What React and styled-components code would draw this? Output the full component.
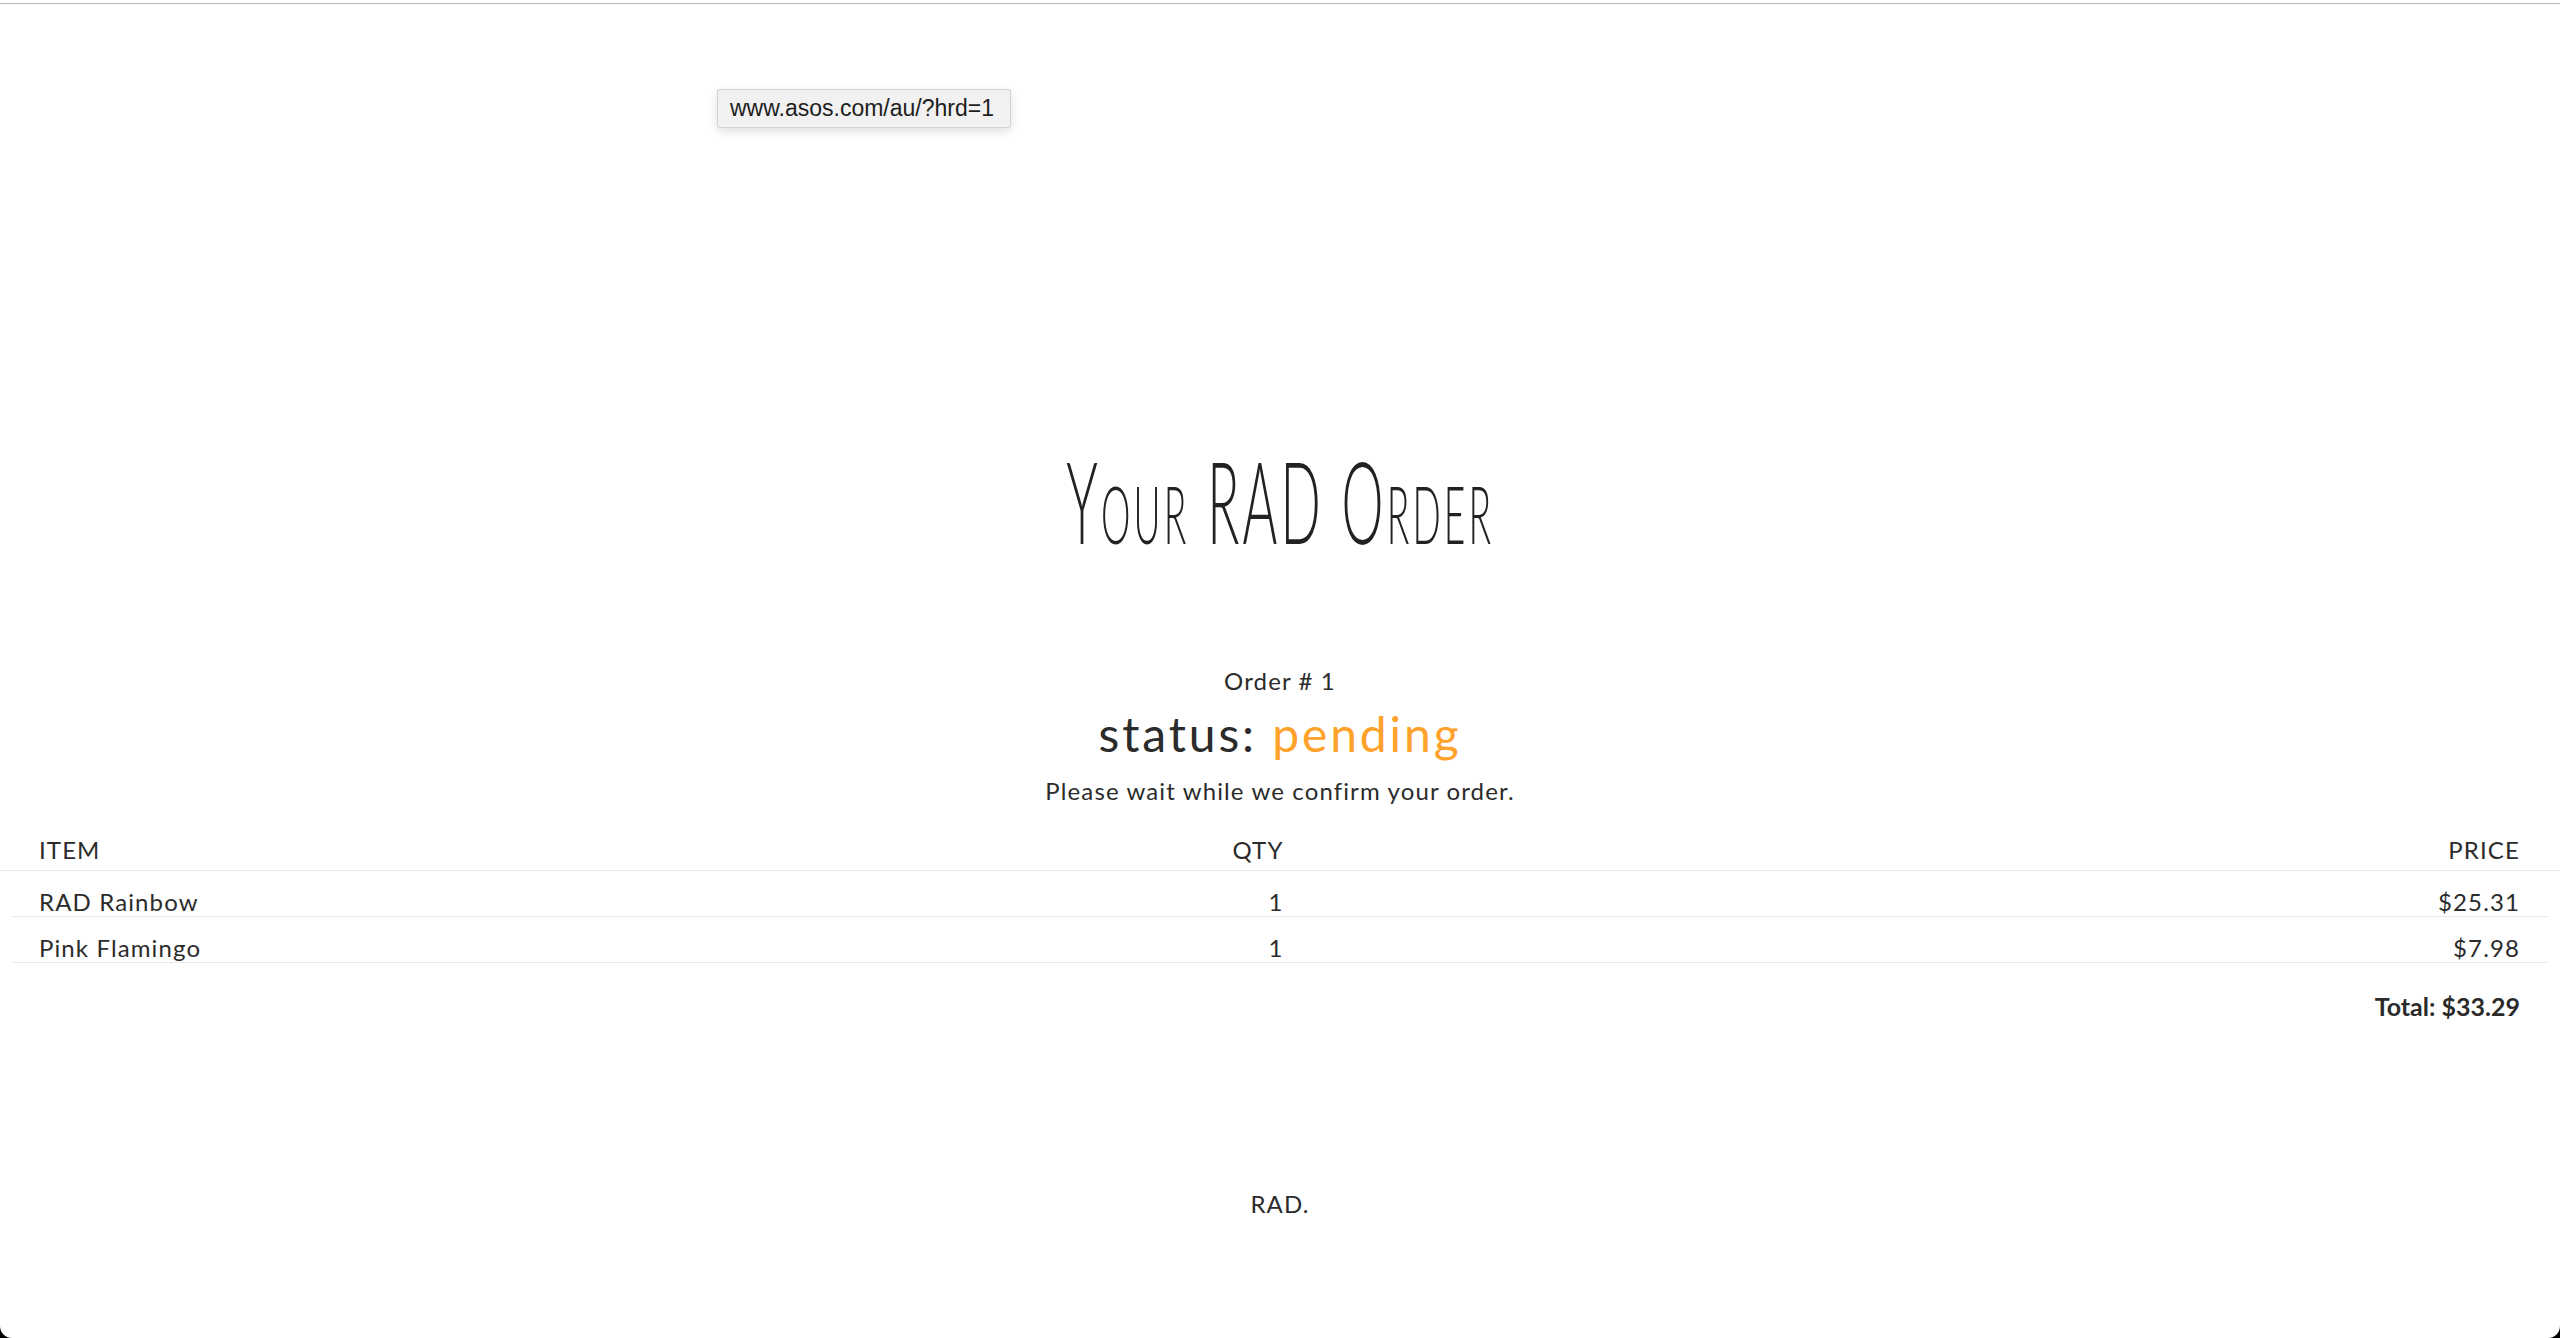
import React from "react";
import styled, { createGlobalStyle } from "styled-components";

const GlobalStyle = createGlobalStyle`
  html {
    background: #000;
  }
  body {
    margin: 0;
    background: transparent;
    font-family: "Lato", "Noto Sans", sans-serif;
    letter-spacing: 0.07em;
    color: #2b2b2b;
  }
`;

const items = [
  { name: "RAD Rainbow", qty: 1, price: 25.31 },
  { name: "Pink Flamingo", qty: 1, price: 7.98 },
];

const App = () => {
  const total = items.reduce((sum, i) => sum + i.price * i.qty, 0);
  return (
    <Frame>
      <GlobalStyle />
      <TopRule />
      <Tooltip>www.asos.com/au/?hrd=1</Tooltip>
      <Main>
        <Title>
          <span>Your RAD Order</span>
        </Title>
        <OrderNo>Order # 1</OrderNo>
        <Status>
          status: <Pending>pending</Pending>
        </Status>
        <Note>Please wait while we confirm your order.</Note>

        <HeadRow>
          <Name>ITEM</Name>
          <Qty>QTY</Qty>
          <Price>PRICE</Price>
        </HeadRow>
        <Items>
          {items.map((item) => (
            <ItemRow key={item.name}>
              <Name>{item.name}</Name>
              <Qty>{item.qty}</Qty>
              <Price>${item.price.toFixed(2)}</Price>
            </ItemRow>
          ))}
        </Items>
        <Total>Total: ${total.toFixed(2)}</Total>
      </Main>
      <Footer>RAD.</Footer>
    </Frame>
  );
};

const Frame = styled.div`
  position: relative;
  min-height: 100vh;
  box-sizing: border-box;
  padding-top: 3px;
  background: #fff;
  border-radius: 0 0 12px 12px;
  overflow: hidden;
`;

const TopRule = styled.div`
  height: 1px;
  background: #b8b8b8;
`;

const Tooltip = styled.div`
  position: absolute;
  left: 717px;
  top: 89px;
  width: 294px;
  height: 39px;
  box-sizing: border-box;
  padding: 0 12px;
  display: flex;
  align-items: center;
  background: #f1f1f1;
  border: 1px solid #d3d3d3;
  border-radius: 2px;
  box-shadow: 0 4px 10px rgba(0, 0, 0, 0.12);
  font-family: "Liberation Sans", Arial, sans-serif;
  font-size: 23px;
  letter-spacing: 0;
  color: #1e1e1e;
  white-space: nowrap;
`;

const Main = styled.main`
  padding-top: 439px;
  text-align: center;
`;

const Title = styled.h1`
  margin: 0;
  font-family: "Lato", sans-serif;
  font-weight: 300;
  font-size: 114px;
  line-height: 1;
  font-variant: small-caps;
  letter-spacing: 0.06em;
  color: #222;

  span {
    display: inline-block;
    transform: scaleX(0.465);
  }
`;

const OrderNo = styled.div`
  margin-top: 108px;
  font-size: 24px;
  line-height: 32px;
`;

const Status = styled.div`
  margin-top: 7px;
  font-size: 48px;
  line-height: 60px;
  letter-spacing: 0.06em;
`;

const Pending = styled.span`
  color: #ffa22b;
`;

const Note = styled.p`
  margin: 11px 0 0;
  font-size: 24px;
  line-height: 32px;
`;

const rowGrid = `
  display: grid;
  grid-template-columns: calc(50% + 4px) 1fr;
  font-size: 24px;
  line-height: 28px;
  text-align: left;
`;

const HeadRow = styled.div`
  ${rowGrid}
  margin-top: 29px;
  padding: 0 40px 6px 39px;
  border-bottom: 1px solid #e4e8ec;
`;

const Items = styled.div`
  margin: 0 12px;
`;

const ItemRow = styled.div`
  ${rowGrid}
  padding: 17px 28px 0 27px;
  border-bottom: 1px solid #e4e8ec;
`;

const Name = styled.div`
  grid-area: 1 / 1;
`;

const Qty = styled.div`
  grid-area: 1 / 1;
  justify-self: end;
`;

const Price = styled.div`
  grid-area: 1 / 2;
  justify-self: end;
`;

const Total = styled.div`
  margin-top: 27px;
  padding-right: 40px;
  text-align: right;
  font-size: 25px;
  font-weight: 700;
  letter-spacing: 0;
  line-height: 32px;
`;

const Footer = styled.footer`
  margin-top: 166px;
  text-align: center;
  font-size: 24px;
  line-height: 32px;
`;

export default App;
